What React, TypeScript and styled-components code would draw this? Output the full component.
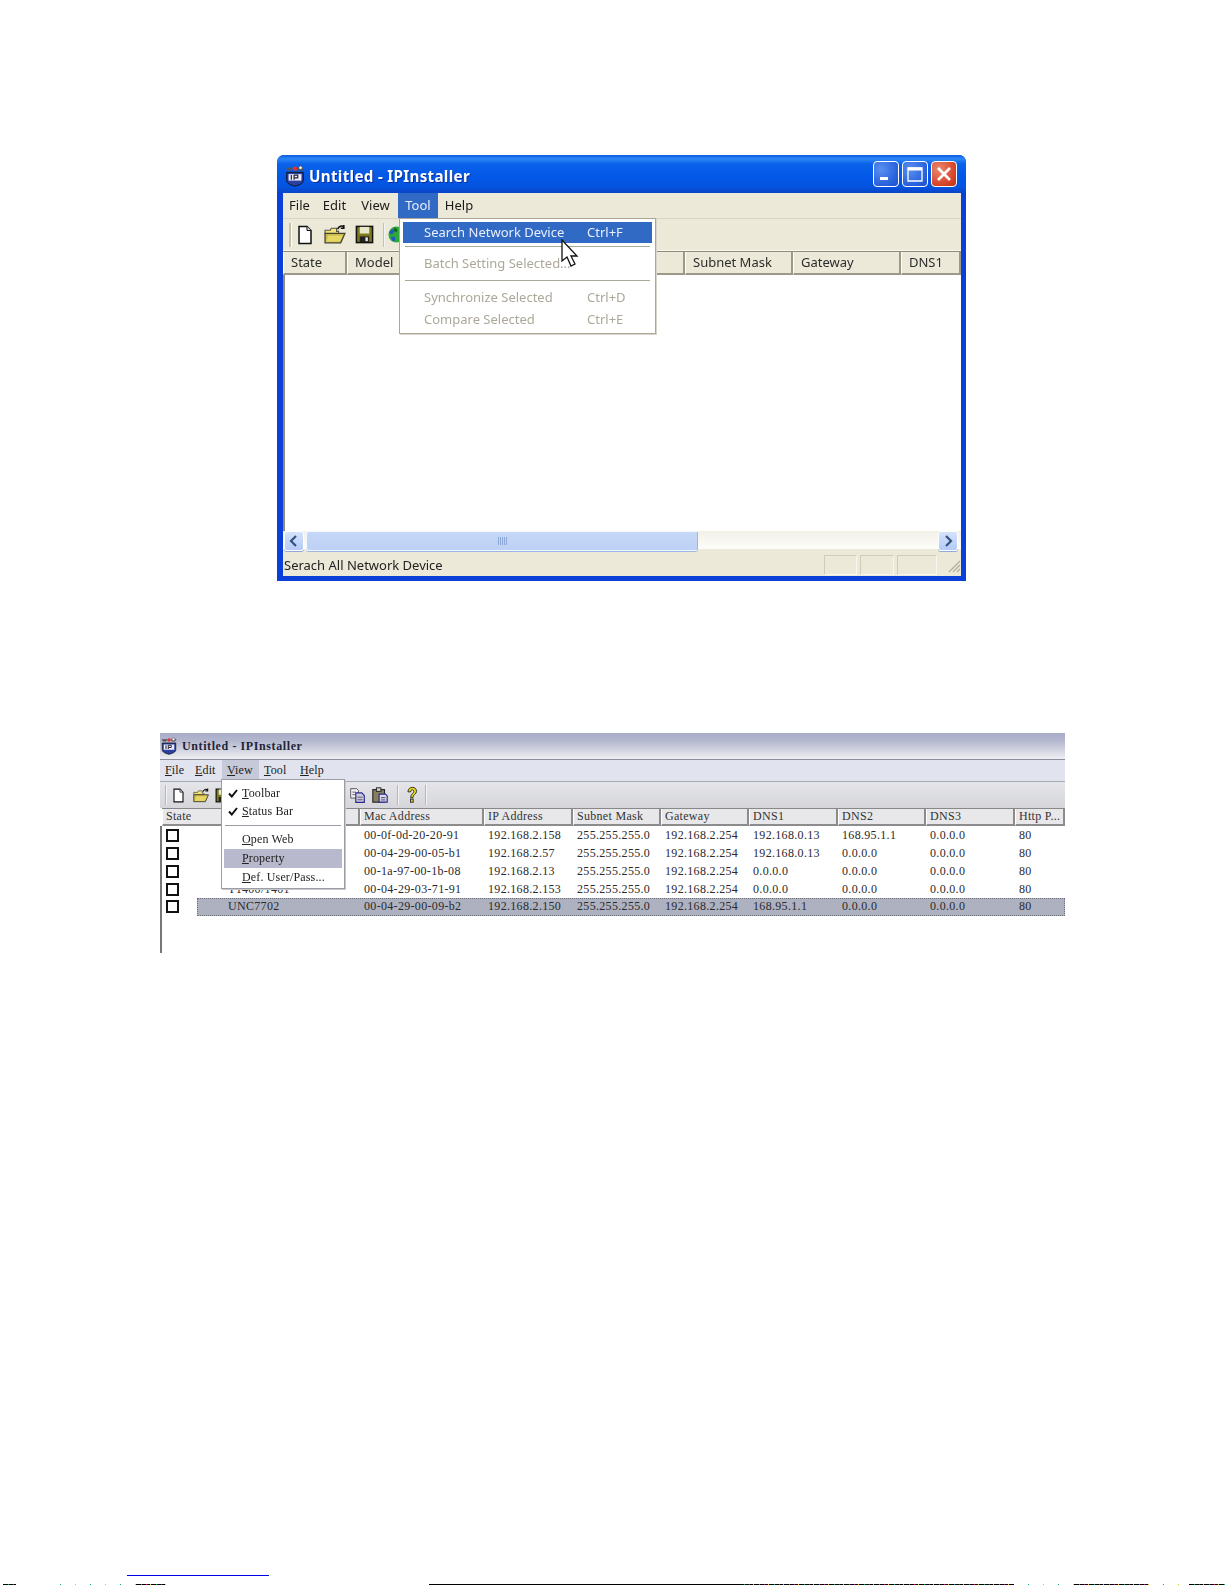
import React from "react";
import styled, { createGlobalStyle } from "styled-components";

const Global = createGlobalStyle`
  html, body { margin: 0; padding: 0; background: #fff; }
  #root { width: 1225px; height: 1585px; overflow: hidden; }
`;

const Page = styled.div`
  width: 1225px;
  height: 1585px;
  display: flex;
  flex-direction: column;
  background: #fff;
`;

/* ---------- first figure: XP styled window ---------- */
const XpWindow = styled.section`
  position: relative;
  box-sizing: border-box;
  width: 689px;
  height: 426px;
  margin: 155px 0 0 277px;
  display: flex;
  flex-direction: column;
  background: #0a3fd8;
  border-radius: 7px 7px 0 0;
  font-family: "Noto Sans", "Open Sans", sans-serif;
  font-size: 13px;
  color: #1a1a1a;
  filter: blur(0.5px);
`;

const XpTitleBar = styled.header`
  height: 38px;
  flex: none;
  box-sizing: border-box;
  display: flex;
  align-items: center;
  padding: 3px 9px 0 7px;
  border-radius: 7px 7px 0 0;
  background: linear-gradient(180deg, #0a5ae0 0%, #2b86f5 10%, #0a62ea 24%, #0357e6 60%, #0453de 85%, #0a44c8 100%);
`;

const XpTitle = styled.h1`
  margin: 0 0 0 3px;
  flex: 1;
  font-family: "Noto Sans", sans-serif;
  font-size: 15.2px;
  font-weight: 700;
  letter-spacing: 0.3px;
  color: #fff;
  text-shadow: 1px 1px 0 #0a2f9c;
`;

const CaptionButton = styled.div<{ $close?: boolean }>`
  box-sizing: border-box;
  width: 26px;
  height: 26px;
  margin-left: 3px;
  margin-top: -3px;
  border: 1px solid #fff;
  border-radius: 4px;
  display: flex;
  align-items: center;
  justify-content: center;
  background: ${(p) =>
    p.$close
      ? "radial-gradient(circle at 30% 30%, #e98a70, #d8452a 65%, #c23214)"
      : "radial-gradient(circle at 30% 30%, #5a90f0, #2a63de 65%, #1c4fc8)"};
`;

const XpFrame = styled.div`
  flex: 1;
  min-height: 0;
  margin: 0 5px 5px 6px;
  display: flex;
  flex-direction: column;
  background: #ece9d8;
`;

const XpMenuBar = styled.nav`
  height: 25px;
  flex: none;
  display: flex;
  align-items: center;
  padding-left: 0;
  border-bottom: 1px solid #d8d5c4;
`;

const XpMenuItem = styled.span<{ $active?: boolean; $w: number }>`
  width: ${(p) => p.$w}px;
  height: 25px;
  line-height: 24px;
  text-align: center;
  background: ${(p) => (p.$active ? "#316ac5" : "transparent")};
  color: ${(p) => (p.$active ? "#e8eefc" : "#1a1a1a")};
`;

const XpToolbar = styled.div`
  height: 31px;
  flex: none;
  display: flex;
  align-items: center;
  padding-left: 6px;
  gap: 0;
  border-bottom: 1px solid #f7f6ef;
`;

const Grip = styled.div`
  width: 2px;
  height: 24px;
  background: #c4c1ae;
  border-right: 1px solid #fff;
`;

const ToolButton = styled.div<{ $w: number }>`
  width: ${(p) => p.$w}px;
  height: 24px;
  flex: none;
  display: flex;
  align-items: center;
  justify-content: center;
`;

const ToolSep = styled.div<{ $h: number; $c: string }>`
  width: 1px;
  height: ${(p) => p.$h}px;
  flex: none;
  background: ${(p) => p.$c};
  border-right: 1px solid #f4f4f4;
`;

const XpHeader = styled.div`
  height: 24px;
  flex: none;
  display: grid;
  grid-template-columns: 64px 109px 114px 115px 108px 108px 1fr;
  border-top: 1px solid #8f8c7c;
  box-sizing: border-box;
`;

const XpHeaderCell = styled.div`
  box-sizing: border-box;
  padding-left: 7px;
  line-height: 21px;
  background: #ece9d8;
  border-right: 2px solid #9c9988;
  border-left: 1px solid #fff;
  border-bottom: 2px solid #9c9988;
  white-space: nowrap;
  overflow: hidden;
  color: #2c2c2c;
`;

const XpList = styled.div`
  flex: 1;
  min-height: 0;
  background: #fff;
  border-left: 2px solid #8f8c7c;
`;

const XpScroll = styled.div`
  height: 23px;
  flex: none;
  box-sizing: border-box;
  display: flex;
  align-items: flex-start;
  padding: 0 3px 2px 1px;
  background: linear-gradient(180deg, #f2f1e8, #fdfdfa 80%, #ece9d8 80%);
`;

const ScrollArrow = styled.div`
  box-sizing: border-box;
  width: 20px;
  height: 20px;
  flex: none;
  display: flex;
  align-items: center;
  justify-content: center;
  border: 1px solid #fff;
  border-radius: 3px;
  background: linear-gradient(180deg, #d5e2fb, #b4cbf6);
  box-shadow: 0 1px 0 #8fa9d8;
`;

const ScrollThumb = styled.div`
  box-sizing: border-box;
  width: 392px;
  height: 20px;
  margin-left: 2px;
  display: flex;
  align-items: center;
  justify-content: center;
  gap: 1px;
  border: 1px solid #f4f7fe;
  border-right-color: #9bb5e4;
  border-radius: 3px;
  background: linear-gradient(180deg, #c6d8f8, #bdd1f6);
  box-shadow: 0 1px 0 #9bb5e4;
`;

const ThumbLine = styled.i`
  width: 1px;
  height: 8px;
  background: #8ea9d8;
`;

const ScrollSpace = styled.div`
  flex: 1;
`;

const XpStatus = styled.footer`
  height: 22px;
  flex: none;
  display: flex;
  align-items: center;
  box-sizing: border-box;
  color: #222;
`;

const StatusText = styled.span`
  flex: 1;
  padding-left: 1px;
`;

const StatusPanel = styled.div<{ $w: number; $gap: number }>`
  box-sizing: border-box;
  width: ${(p) => p.$w}px;
  height: 20px;
  margin-right: ${(p) => p.$gap}px;
  border: 1px solid #cfccb8;
  border-bottom-color: #f7f6ef;
  border-right-color: #f7f6ef;
`;

const XpDropMenu = styled.div`
  position: absolute;
  left: 122px;
  top: 63px;
  box-sizing: border-box;
  width: 257px;
  height: 116px;
  padding: 3px;
  background: #fff;
  border: 1px solid #aca899;
  box-shadow: 1px 1px 0 #d8d6cc;
`;

const XpDropItem = styled.div<{ $hot?: boolean; $off?: boolean; $h: number }>`
  height: ${(p) => p.$h}px;
  line-height: ${(p) => p.$h}px;
  display: flex;
  padding-left: 21px;
  background: ${(p) => (p.$hot ? "#316ac5" : "transparent")};
  color: ${(p) => (p.$hot ? "#e8eefc" : p.$off ? "#aca899" : "#222")};
`;

const DropLabel = styled.span`
  width: 163px;
  white-space: nowrap;
`;

const XpDropSep = styled.div<{ $m: string }>`
  height: 1px;
  margin: ${(p) => p.$m};
  background: #aca899;
`;

const Cursor = styled.svg`
  position: absolute;
  left: 284px;
  top: 84px;
`;

/* ---------- second figure: classic screenshot ---------- */
const ClassicWindow = styled.section`
  position: relative;
  box-sizing: border-box;
  width: 905px;
  height: 220px;
  margin: 152px 0 0 160px;
  display: flex;
  flex-direction: column;
  font-family: "Liberation Serif", "Times New Roman", serif;
  font-size: 12px;
  color: #222;
  filter: blur(0.3px);
`;

const ClassicTitle = styled.header`
  height: 26px;
  flex: none;
  display: flex;
  align-items: center;
  padding-left: 0;
  background: linear-gradient(180deg, #a7abc7 0%, #b4b8cf 30%, #dcdde6 78%, #eeeef2 100%);
`;

const ClassicTitleText = styled.h2`
  margin: 0 0 0 4px;
  font-size: 12px;
  font-weight: 700;
  letter-spacing: 0.6px;
  color: #22243a;
`;

const ClassicMenuBar = styled.nav`
  height: 23px;
  flex: none;
  box-sizing: border-box;
  display: flex;
  align-items: center;
  background: #e1e4ee;
  border-top: 1px solid #8b8d9c;
  border-bottom: 1px solid #a9a9ae;
`;

const ClassicMenuItem = styled.span<{ $w: number; $active?: boolean }>`
  box-sizing: border-box;
  width: ${(p) => p.$w}px;
  height: 21px;
  line-height: 20px;
  padding-left: 5px;
  letter-spacing: 0.15px;
  background: ${(p) => (p.$active ? "#c6c9d8" : "transparent")};
`;

const Key = styled.span`
  text-decoration: underline;
`;

const ClassicToolbar = styled.div`
  height: 26px;
  flex: none;
  display: flex;
  align-items: center;
  padding-left: 5px;
  background: linear-gradient(180deg, #e4e5ea, #d6d6da);
`;

const ClassicHeader = styled.div`
  height: 18px;
  flex: none;
  box-sizing: border-box;
  display: grid;
  grid-template-columns: 198px 124px 89px 88px 88px 89px 88px 89px 1fr;
  margin-left: 2px;
  border-top: 1px solid #888;
`;

const ClassicHeaderCell = styled.div`
  box-sizing: border-box;
  padding-left: 3px;
  line-height: 15px;
  letter-spacing: 0.3px;
  background: #e8e8ea;
  border-right: 2px solid #8c8c8c;
  border-bottom: 2px solid #8c8c8c;
  border-left: 1px solid #fff;
  white-space: nowrap;
  color: #333;
`;

const ClassicList = styled.div`
  flex: 1;
  min-height: 0;
  border-left: 2px solid #777;
  padding-top: 1px;
  background: #fff;
`;

const Row = styled.div`
  height: 17.75px;
  display: flex;
  align-items: center;
`;

const CheckSlot = styled.div`
  width: 35px;
  flex: none;
  padding-left: 4px;
  box-sizing: border-box;
`;

const CheckBox = styled.div`
  box-sizing: border-box;
  width: 13px;
  height: 13px;
  border: 2px solid #111;
  background: #fff;
`;

const RowBody = styled.div<{ $selected?: boolean }>`
  flex: 1;
  height: 100%;
  display: grid;
  grid-template-columns: 161px 124px 89px 88px 88px 89px 88px 89px 1fr;
  align-items: center;
  box-sizing: border-box;
  background: ${(p) => (p.$selected ? "#aeb2c0" : "transparent")};
  outline: ${(p) => (p.$selected ? "1px dotted #6c6f7c" : "none")};
  outline-offset: -1px;
`;

const Cell = styled.div<{ $first?: boolean }>`
  padding-left: ${(p) => (p.$first ? "31px" : "6px")};
  white-space: nowrap;
  letter-spacing: 0.32px;
  color: #2a2a2e;
`;

const ClassicDropMenu = styled.div`
  position: absolute;
  left: 61px;
  top: 46px;
  box-sizing: border-box;
  width: 124px;
  height: 110px;
  padding: 4px 2px 2px;
  background: #fff;
  border: 1px solid #9c9ca4;
  box-shadow: 1px 1px 0 #c8c8cc;
  font-size: 12px;
  letter-spacing: 0.15px;
`;

const ClassicDropItem = styled.div<{ $hot?: boolean; $h: number }>`
  height: ${(p) => p.$h}px;
  line-height: ${(p) => p.$h}px;
  display: flex;
  align-items: center;
  background: ${(p) => (p.$hot ? "#b8b9cc" : "transparent")};
`;

const CheckMark = styled.span`
  width: 18px;
  flex: none;
  display: flex;
  justify-content: center;
`;

const ClassicDropSep = styled.div`
  height: 1px;
  margin: 5px 1px 4px;
  background: #9c9ca4;
`;

/* ---------- page edge artefacts ---------- */
const EdgeArea = styled.div`
  margin-top: auto;
  height: 11px;
  display: flex;
  flex-direction: column;
  justify-content: flex-end;
`;

const LinkRule = styled.div`
  width: 142px;
  height: 1px;
  margin: 0 0 8px 127px;
  background: #0000e6;
`;

const EdgeStrip = styled.div`
  height: 1px;
  display: flex;
`;

const EdgePiece = styled.i<{ $w: number; $bg: string }>`
  width: ${(p) => p.$w}px;
  height: 1px;
  flex: none;
  background: ${(p) => p.$bg};
`;

const noise =
  "repeating-linear-gradient(90deg,#000 0 5px,#0a7 5px 6px,#000 6px 10px,#c08 10px 11px,#000 11px 14px,#db0 14px 15px)";
const sparse =
  "repeating-linear-gradient(90deg,#fff 0 14px,#0a8 14px 15px,#fff 15px 29px,#dc0 29px 30px)";

/* ---------- drawings ---------- */
const AppIcon = ({ s }: { s: number }) => (
  <svg width={s} height={s} viewBox="0 0 24 24">
    <path d="M2 3h8l-2 3H4zM14 3h8l-2 3h-4z" fill="#555" />
    <circle cx="12" cy="4" r="2.4" fill="#d33" />
    <circle cx="18" cy="3" r="2" fill="#eee" stroke="#333" strokeWidth=".6" />
    <path d="M3 8h18v9c0 3-4 5-9 6-5-1-9-3-9-6z" fill="#2a3fa0" stroke="#111" />
    <rect x="5" y="10" width="14" height="7" fill="#eef" />
    <path d="M8 11v5M11 11v5M11 11h4v3h-4" stroke="#223" strokeWidth="1.3" fill="none" />
  </svg>
);

const NewIcon = ({ s }: { s: number }) => (
  <svg width={s} height={s} viewBox="0 0 20 20">
    <path d="M4 1.500h8l4 4v13H4z" fill="#fff" stroke="#111" strokeWidth="1.5" />
    <path d="M12 1.500v4h4" fill="#ddd" stroke="#111" />
  </svg>
);

const OpenIcon = ({ s }: { s: number }) => (
  <svg width={s} height={s} viewBox="0 0 22 20">
    <path d="M1 6h5l1-2h5v3h2v2H1z" fill="#f5e27a" stroke="#554" />
    <path d="M1 18V9h15l4 0-4 9z" fill="#c9b84a" stroke="#443" strokeWidth="1.2" />
    <path d="M4 11h14l-3 6H2z" fill="#e6d664" />
    <path d="M13 5c1-3 4-4 6-2M19 1v3h-3" fill="none" stroke="#111" strokeWidth="1.4" />
  </svg>
);

const SaveIcon = ({ s }: { s: number }) => (
  <svg width={s} height={s} viewBox="0 0 20 20">
    <rect x="1.500" y="1.500" width="17" height="17" fill="#7d7a1e" stroke="#111" strokeWidth="1.6" />
    <rect x="5" y="2" width="10" height="7" fill="#e8e8c8" />
    <rect x="5" y="12" width="10" height="6" fill="#222" />
    <rect x="11" y="13" width="2.5" height="4" fill="#eee" />
  </svg>
);

const GlobeIcon = ({ s }: { s: number }) => (
  <svg width={s} height={s} viewBox="0 0 20 20">
    <circle cx="10" cy="10" r="8.500" fill="#2fa83a" />
    <path d="M2 8l4-4 2 3-3 3zM4 13l4-1 1 4-3 1z" fill="#1f56c8" />
    <path d="M8 2l3 3-1 3-3-2z" fill="#0c6a1c" />
  </svg>
);

const CopyIcon = ({ s }: { s: number }) => (
  <svg width={s} height={s} viewBox="0 0 20 20">
    <path d="M2 2h7l2 2v9H2z" fill="#f4f4f4" stroke="#444" />
    <path d="M8 7h7l3 3v8H8z" fill="#ccd" stroke="#2a2a90" strokeWidth="1.4" />
    <path d="M10 12h6M10 15h6M4 6h4M4 9h3" stroke="#445" />
  </svg>
);

const PasteIcon = ({ s }: { s: number }) => (
  <svg width={s} height={s} viewBox="0 0 20 20">
    <rect x="2" y="4" width="13" height="14" fill="#86805a" stroke="#222" strokeWidth="1.2" />
    <rect x="6" y="2" width="5" height="4" fill="#ccc" stroke="#222" />
    <path d="M9 9h7l2 2v7H9z" fill="#dde" stroke="#2a2a90" strokeWidth="1.3" />
    <path d="M11 13h5M11 15.500h5" stroke="#335" />
  </svg>
);

const HelpIcon = ({ s }: { s: number }) => (
  <svg width={s} height={s} viewBox="0 0 20 20">
    <path
      d="M5.500 6.500C5.500 3 8 1.500 10.500 1.500S15 3 15 6c0 3-4 3.500-4 7h-2.500c0-4.500 3.500-4.500 3.500-7 0-1-.5-1.800-1.500-1.800S8.500 5 8.500 6.500z"
      fill="#e8dc1a"
      stroke="#222"
    />
    <rect x="8.300" y="14.500" width="3" height="3.500" fill="#e8dc1a" stroke="#222" />
  </svg>
);

const ArrowIcon = ({ right }: { right?: boolean }) => (
  <svg width="10" height="12" viewBox="0 0 10 12">
    <path
      d={right ? "M3 1l5 5-5 5" : "M7 1L2 6l5 5"}
      fill="none"
      stroke="#36527f"
      strokeWidth="2.200"
    />
  </svg>
);

const Tick = () => (
  <svg width="10" height="9" viewBox="0 0 10 9">
    <path d="M1 4.500l2.800 3L9 1" fill="none" stroke="#111" strokeWidth="2" />
  </svg>
);

const ResizeGrip = () => (
  <svg width="16" height="16" viewBox="0 0 16 16">
    <path d="M15 4L4 15M15 8l-7 7M15 12l-3 3" stroke="#b0ad9b" strokeWidth="1.200" />
  </svg>
);

/* Columns behind the open menu show no label in the reference. */
const xpColumns = ["State", "Model", "", " ", "Subnet Mask", "Gateway", "DNS1"];
const classicColumns = [
  "State",
  "Mac Address",
  "IP Address",
  "Subnet Mask",
  "Gateway",
  "DNS1",
  "DNS2",
  "DNS3",
  "Http P...",
];

const rows = [
  ["", "00-0f-0d-20-20-91", "192.168.2.158", "255.255.255.0", "192.168.2.254", "192.168.0.13", "168.95.1.1", "0.0.0.0", "80"],
  ["", "00-04-29-00-05-b1", "192.168.2.57", "255.255.255.0", "192.168.2.254", "192.168.0.13", "0.0.0.0", "0.0.0.0", "80"],
  ["", "00-1a-97-00-1b-08", "192.168.2.13", "255.255.255.0", "192.168.2.254", "0.0.0.0", "0.0.0.0", "0.0.0.0", "80"],
  ["T1400/1401", "00-04-29-03-71-91", "192.168.2.153", "255.255.255.0", "192.168.2.254", "0.0.0.0", "0.0.0.0", "0.0.0.0", "80"],
  ["UNC7702", "00-04-29-00-09-b2", "192.168.2.150", "255.255.255.0", "192.168.2.254", "168.95.1.1", "0.0.0.0", "0.0.0.0", "80"],
];

const Mnemonic = ({ k, rest }: { k: string; rest: string }) => (
  <span>
    <Key>{k}</Key>
    {rest}
  </span>
);

export default function App() {
  return (
    <Page>
      <Global />
      <XpWindow>
        <XpTitleBar>
          <AppIcon s={22} />
          <XpTitle>Untitled - IPInstaller</XpTitle>
          <CaptionButton>
            <svg width="14" height="14" viewBox="0 0 14 14">
              <rect x="1" y="10" width="8" height="3" fill="#fff" />
            </svg>
          </CaptionButton>
          <CaptionButton>
            <svg width="16" height="16" viewBox="0 0 16 16">
              <path d="M1 2h14v13H1z" fill="none" stroke="#fff" strokeWidth="1.300" />
              <rect x="1" y="1.500" width="14" height="3" fill="#fff" />
            </svg>
          </CaptionButton>
          <CaptionButton $close>
            <svg width="16" height="16" viewBox="0 0 16 16">
              <path d="M2 2l12 12M14 2L2 14" stroke="#fff" strokeWidth="2.600" />
            </svg>
          </CaptionButton>
        </XpTitleBar>
        <XpFrame>
          <XpMenuBar>
            <XpMenuItem $w={33}>File</XpMenuItem>
            <XpMenuItem $w={37}>Edit</XpMenuItem>
            <XpMenuItem $w={45}>View</XpMenuItem>
            <XpMenuItem $w={40} $active>Tool</XpMenuItem>
            <XpMenuItem $w={42}>Help</XpMenuItem>
          </XpMenuBar>
          <XpToolbar>
            <Grip />
            <ToolButton $w={26}><NewIcon s={20} /></ToolButton>
            <ToolButton $w={34}><OpenIcon s={23} /></ToolButton>
            <ToolButton $w={25}><SaveIcon s={19} /></ToolButton>
            <ToolButton $w={6} />
            <ToolSep $h={24} $c="#c4c1ae" />
            <ToolButton $w={22}><GlobeIcon s={19} /></ToolButton>
          </XpToolbar>
          <XpHeader>
            {xpColumns.map((c, i) => (
              <XpHeaderCell key={i}>{c}</XpHeaderCell>
            ))}
          </XpHeader>
          <XpList />
          <XpScroll>
            <ScrollArrow><ArrowIcon /></ScrollArrow>
            <ScrollThumb>
              {[0, 1, 2, 3, 4].map((i) => (
                <ThumbLine key={i} />
              ))}
            </ScrollThumb>
            <ScrollSpace />
            <ScrollArrow><ArrowIcon right /></ScrollArrow>
          </XpScroll>
          <XpStatus>
            <StatusText>Serach All Network Device</StatusText>
            <StatusPanel $w={33} $gap={3} />
            <StatusPanel $w={34} $gap={3} />
            <StatusPanel $w={40} $gap={8} />
            <ResizeGrip />
          </XpStatus>
        </XpFrame>
        <XpDropMenu>
          <XpDropItem $h={21} $hot>
            <DropLabel>Search Network Device</DropLabel>
            <span>Ctrl+F</span>
          </XpDropItem>
          <XpDropSep $m="3px 2px 0" />
          <XpDropItem $h={33} $off>
            <DropLabel>Batch Setting Selected...</DropLabel>
          </XpDropItem>
          <XpDropSep $m="0 2px 6px" />
          <XpDropItem $h={21} $off>
            <DropLabel>Synchronize Selected</DropLabel>
            <span>Ctrl+D</span>
          </XpDropItem>
          <XpDropItem $h={22} $off>
            <DropLabel>Compare Selected</DropLabel>
            <span>Ctrl+E</span>
          </XpDropItem>
        </XpDropMenu>
        <Cursor width="18" height="28" viewBox="0 0 18 28">
          <path d="M1 1v21l5-4 4 9 4-2-4-8h6z" fill="#fff" stroke="#111" strokeWidth="1.300" />
        </Cursor>
      </XpWindow>

      <ClassicWindow>
        <ClassicTitle>
          <AppIcon s={18} />
          <ClassicTitleText>Untitled - IPInstaller</ClassicTitleText>
        </ClassicTitle>
        <ClassicMenuBar>
          <ClassicMenuItem $w={30}><Mnemonic k="F" rest="ile" /></ClassicMenuItem>
          <ClassicMenuItem $w={32}><Mnemonic k="E" rest="dit" /></ClassicMenuItem>
          <ClassicMenuItem $w={37} $active><Mnemonic k="V" rest="iew" /></ClassicMenuItem>
          <ClassicMenuItem $w={36}><Mnemonic k="T" rest="ool" /></ClassicMenuItem>
          <ClassicMenuItem $w={36}><Mnemonic k="H" rest="elp" /></ClassicMenuItem>
        </ClassicMenuBar>
        <ClassicToolbar>
          <ToolSep $h={20} $c="#b4b4ba" />
          <ToolButton $w={22}><NewIcon s={15} /></ToolButton>
          <ToolButton $w={24}><OpenIcon s={17} /></ToolButton>
          <ToolButton $w={18}><SaveIcon s={15} /></ToolButton>
          <ToolButton $w={114} />
          <ToolButton $w={24}><CopyIcon s={17} /></ToolButton>
          <ToolButton $w={22}><PasteIcon s={18} /></ToolButton>
          <ToolButton $w={6} />
          <ToolSep $h={20} $c="#b4b4ba" />
          <ToolButton $w={26}><HelpIcon s={18} /></ToolButton>
          <ToolSep $h={20} $c="#b4b4ba" />
        </ClassicToolbar>
        <ClassicHeader>
          {classicColumns.map((c) => (
            <ClassicHeaderCell key={c}>{c}</ClassicHeaderCell>
          ))}
        </ClassicHeader>
        <ClassicList>
          {rows.map((r, i) => (
            <Row key={r[1]}>
              <CheckSlot><CheckBox /></CheckSlot>
              <RowBody $selected={i === 4}>
                {r.map((v, j) => (
                  <Cell key={j} $first={j === 0}>{v}</Cell>
                ))}
              </RowBody>
            </Row>
          ))}
        </ClassicList>
        <ClassicDropMenu>
          <ClassicDropItem $h={18}>
            <CheckMark><Tick /></CheckMark>
            <Mnemonic k="T" rest="oolbar" />
          </ClassicDropItem>
          <ClassicDropItem $h={18}>
            <CheckMark><Tick /></CheckMark>
            <Mnemonic k="S" rest="tatus Bar" />
          </ClassicDropItem>
          <ClassicDropSep />
          <ClassicDropItem $h={19}>
            <CheckMark />
            <Mnemonic k="O" rest="pen Web" />
          </ClassicDropItem>
          <ClassicDropItem $h={19} $hot>
            <CheckMark />
            <Mnemonic k="P" rest="roperty" />
          </ClassicDropItem>
          <ClassicDropItem $h={19}>
            <CheckMark />
            <Mnemonic k="D" rest="ef. User/Pass..." />
          </ClassicDropItem>
        </ClassicDropMenu>
      </ClassicWindow>

      <EdgeArea>
        <LinkRule />
        <EdgeStrip>
          <EdgePiece $w={3} $bg="#fff" />
          <EdgePiece $w={13} $bg={noise} />
          <EdgePiece $w={30} $bg="#fff" />
          <EdgePiece $w={90} $bg={sparse} />
          <EdgePiece $w={30} $bg={noise} />
          <EdgePiece $w={263} $bg="#fff" />
          <EdgePiece $w={310} $bg="#000" />
          <EdgePiece $w={275} $bg={noise} />
          <EdgePiece $w={60} $bg={sparse} />
          <EdgePiece $w={75} $bg={noise} />
          <EdgePiece $w={40} $bg={sparse} />
          <EdgePiece $w={36} $bg={noise} />
        </EdgeStrip>
      </EdgeArea>
    </Page>
  );
}
